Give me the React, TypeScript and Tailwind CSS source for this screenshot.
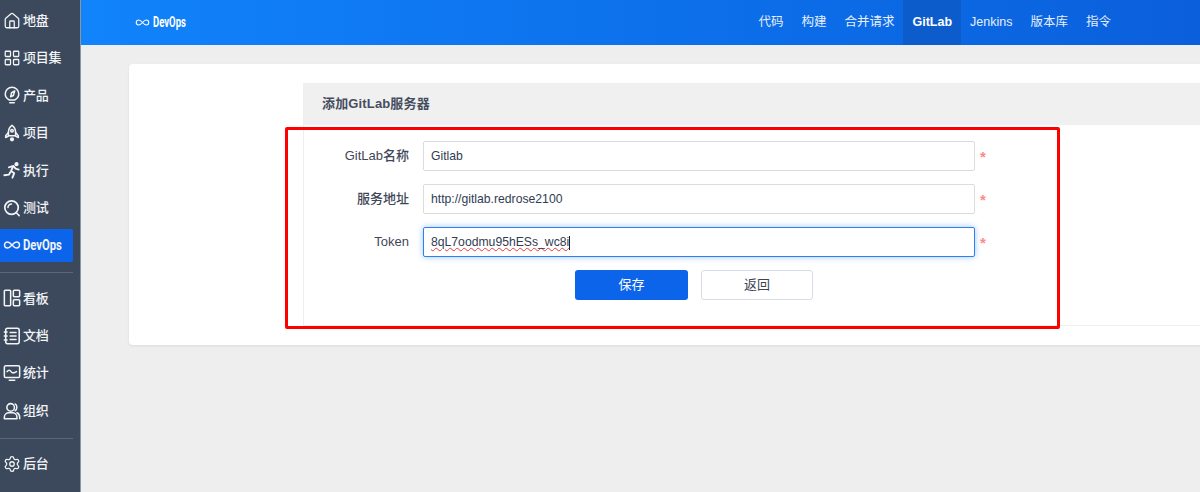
import { House, LayoutGrid, Settings, Infinity as InfinityIcon } from "lucide-react";
import type { ReactNode } from "react";

const font = "font-['Liberation_Sans','Noto_Sans_CJK_SC',sans-serif]";

function Glyph({ children }: { children: ReactNode }) {
  return (
    <svg viewBox="0 0 20 20" className="w-[18px] h-[18px]" fill="none" stroke="currentColor" strokeWidth="1.7" strokeLinecap="round" strokeLinejoin="round">
      {children}
    </svg>
  );
}

function RunIcon() {
  return (
    <Glyph>
      <circle cx="15" cy="3.5" r="1.5" fill="currentColor" />
      <path strokeWidth="2.1" d="M6.5 7l5-1.5 2.5 3 3.5 1M11.5 5.5L9 11l3.5 2.5-2 5M8.5 12l-2 3.2-5 .6" />
    </Glyph>
  );
}

function BulbIcon() {
  return (
    <Glyph>
      <path d="M7 15.5C4 14 2.5 11.5 2.5 9a7.5 7.5 0 0 1 15 0c0 2.5-1.5 5-4.5 6.5z" />
      <path d="M7.5 18.5h5M13 5.5l-1.5 5-3 1.5 1-4.5z" />
    </Glyph>
  );
}

function RocketIcon() {
  return (
    <Glyph>
      <path d="M10 1.5c2.800 2 4 4.800 4 8v3.500H6V9.500c0-3.200 1.200-6 4-8z" />
      <path d="M6 9.500l-3 3.500v2l3-1.500M14 9.500l3 3.500v2l-3-1.500" />
      <circle cx="10" cy="7.500" r="1.400" />
      <circle cx="10" cy="17" r="1.500" fill="currentColor" />
    </Glyph>
  );
}

function TestIcon() {
  return (
    <Glyph>
      <circle cx="9.500" cy="9.500" r="7.500" strokeWidth="1.900" />
      <path d="M14.500 15l3.500 3.500M5.500 9.500a4 4 0 0 1 4-4" />
    </Glyph>
  );
}

function BoardIcon() {
  return (
    <Glyph>
      <rect x="1.500" y="1.500" width="7" height="17" rx="1" />
      <rect x="11.500" y="1.500" width="7" height="7" rx="1" />
      <rect x="11.500" y="12" width="7" height="6.500" rx="1" />
    </Glyph>
  );
}

function DocIcon() {
  return (
    <Glyph>
      <rect x="3" y="1.500" width="15" height="17" rx="2" />
      <path d="M1.500 5.500h3M1.500 10h3M1.500 14.500h3M8 6h6.500M8 10h6.500M8 14h6.500" />
    </Glyph>
  );
}

function ScreenIcon() {
  return (
    <Glyph>
      <rect x="1.500" y="2" width="17" height="13" rx="1.500" />
      <path d="M4.500 8.500c1.500-2 3-2 4.500 0s3 2 6 0M7 18h6" />
    </Glyph>
  );
}

function PeopleIcon() {
  return (
    <Glyph>
      <circle cx="8.500" cy="6" r="4.200" />
      <path d="M1.500 18.500v-1.500c0-3 2.500-5 5-5h4c2.500 0 5 2 5 5v1.500zM13.500 2.300c2.500 1 2.500 6 0 7.400M15.500 12c2 .8 3 2.800 3 5v1.500" />
    </Glyph>
  );
}

function SideItem({ icon, label, active }: { icon: ReactNode; label: string; active?: boolean }) {
  return (
    <div className="h-[37.4px] flex items-center shrink-0">
      <div className={`w-[73px] h-[33px] flex items-center pl-[2px] gap-[2px] rounded-r-[2px] ${active ? "bg-[#0c64eb]" : ""}`}>
        <span className="w-[19px] flex justify-center shrink-0">{icon}</span>
        {active ? (
          <span className="font-['Roboto',sans-serif] font-bold text-[15px] leading-none origin-left scale-x-[0.75] mt-[1px] whitespace-nowrap">{label}</span>
        ) : (
          <span className="text-[13px] font-medium whitespace-nowrap tracking-[-0.2px]">{label}</span>
        )}
      </div>
    </div>
  );
}

function Field({ label, value, focused }: { label: string; value: string; focused?: boolean }) {
  return (
    <div className="flex items-center h-[30px]">
      <div className="w-[105px] text-right text-[13px] font-medium text-[#3f4757] shrink-0">{label}</div>
      <div
        className={`ml-[14px] w-[552px] h-[30px] flex items-center px-[7px] pt-px text-[12.2px] text-[#313c52] bg-white rounded-[2px] border ${
          focused
            ? "border-[#2e7ff0] shadow-[0_0_6px_rgba(46,127,240,0.45)]"
            : "border-[#dcdcdc]"
        }`}
      >
        {focused ? (
          <>
            <span className="underline decoration-wavy decoration-[#e83a3a] decoration-1 underline-offset-1">{value}</span>
            <span className="w-px h-[14px] bg-[#222]" />
          </>
        ) : (
          value
        )}
      </div>
      <span className="ml-[5px] text-[#fb8a8a] text-[15px] font-bold leading-none">*</span>
    </div>
  );
}

const navItems = ["代码", "构建", "合并请求", "GitLab", "Jenkins", "版本库", "指令"];

export default function App() {
  return (
    <div className={`${font} relative flex w-[1200px] h-[492px] overflow-hidden bg-[#eeeeee]`}>
      {/* Sidebar */}
      <aside className="w-[81px] h-full shrink-0 bg-[#3c495c] border-r border-[#8d96a3] text-[#f2f4f6] flex flex-col pt-[2px]">
        <SideItem icon={<House size={18} strokeWidth={1.7} />} label="地盘" />
        <SideItem icon={<LayoutGrid size={18} strokeWidth={1.7} />} label="项目集" />
        <SideItem icon={<BulbIcon />} label="产品" />
        <SideItem icon={<RocketIcon />} label="项目" />
        <SideItem icon={<RunIcon />} label="执行" />
        <SideItem icon={<TestIcon />} label="测试" />
        <SideItem icon={<InfinityIcon size={18} strokeWidth={1.9} />} label="DevOps" active />
        <div className="w-[73px] h-px bg-[#5c6878] mt-[8px] mb-[7px] shrink-0" />
        <SideItem icon={<BoardIcon />} label="看板" />
        <SideItem icon={<DocIcon />} label="文档" />
        <SideItem icon={<ScreenIcon />} label="统计" />
        <SideItem icon={<PeopleIcon />} label="组织" />
        <div className="w-[73px] h-px bg-[#5c6878] mt-[9px] mb-[6px] shrink-0" />
        <SideItem icon={<Settings size={18} strokeWidth={1.7} />} label="后台" />
      </aside>

      <div className="flex-1 min-w-0 flex flex-col">
        {/* Top bar */}
        <header className="h-[45px] shrink-0 bg-gradient-to-r from-[#1183fb] to-[#0b5fdc] flex items-center text-white">
          <div className="ml-[54px] flex items-center gap-[3px]">
            <InfinityIcon size={15} strokeWidth={1.8} />
            <span className="font-['Roboto',sans-serif] font-bold text-[14px] origin-left scale-x-[0.68] whitespace-nowrap">DevOps</span>
          </div>
          <nav className="ml-auto mr-[80px] flex h-full text-[12.5px] text-[#e6effc]">
            {navItems.map((item) => (
              <div
                key={item}
                className={`h-full flex items-center px-[9px] ${
                  item === "GitLab" ? "bg-[#0d5ccb] font-bold text-white" : ""
                }`}
              >
                {item}
              </div>
            ))}
          </nav>
        </header>

        {/* Content card */}
        <main className="flex-1 min-h-0 pt-[19px] pl-[48px]">
          <div className="w-[1100px] h-[281px] bg-white rounded-[4px] shadow-[0_1px_3px_rgba(0,0,0,0.08)] pt-[19px] pl-[174px]">
            <div className="h-[243px] border-b border-l border-[#efefef]">
              <div className="h-[42px] bg-[#f0f0f0] flex items-center pl-[18px] text-[13px] font-bold tracking-[0.15px] text-[#454d5e]">
                添加GitLab服务器
              </div>
              <div className="pt-[16px] flex flex-col gap-[13px]">
                <Field label="GitLab名称" value="Gitlab" />
                <Field label="服务地址" value="http://gitlab.redrose2100" />
                <Field label="Token" value="8qL7oodmu95hESs_wc8i" focused />
                <div className="flex gap-[13px] pl-[271px]">
                  <button className="w-[113px] h-[30px] rounded-[3px] bg-[#0c64eb] text-white text-[13px]">保存</button>
                  <button className="w-[112px] h-[30px] rounded-[3px] bg-white border border-[#d8dce6] text-[#3c4353] text-[13px]">返回</button>
                </div>
              </div>
            </div>
          </div>
        </main>
      </div>

      {/* Red annotation drawn over the form */}
      <div className="absolute left-[285px] top-[127px] w-[775px] h-[202px] border-[3px] border-[#ff0000] rounded-[2px] pointer-events-none" />
    </div>
  );
}
